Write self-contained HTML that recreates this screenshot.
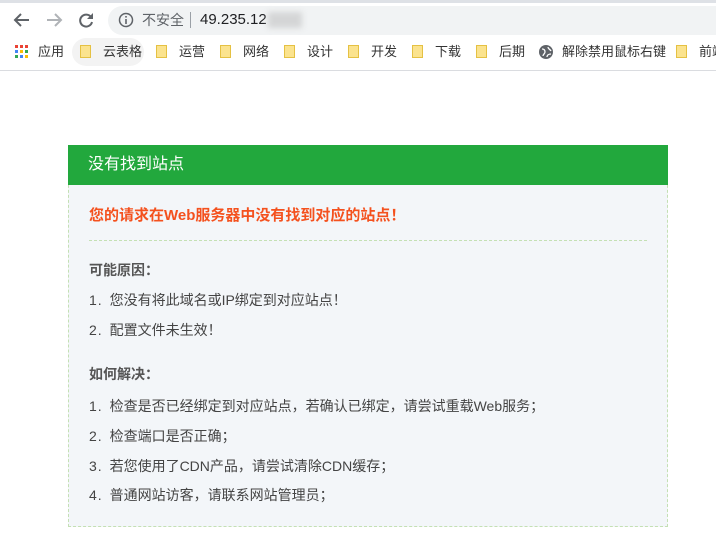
<!DOCTYPE html>
<html><head><meta charset="utf-8"><style>
*{margin:0;padding:0;box-sizing:border-box}
body{width:716px;height:559px;background:#fff;font-family:"Liberation Sans","Noto Sans CJK SC",sans-serif;position:relative;overflow:hidden;color:#333}
.abs{position:absolute}
.top{left:0;top:0;width:716px;height:3px;background:#dee1e6}
.addr{left:108px;top:6px;width:640px;height:29px;border-radius:15px;background:#f1f3f4}
.bm{top:38px;height:28px;font-size:13px;color:#333;line-height:28px;white-space:nowrap}
.fold{display:inline-block;width:11px;height:13px;background:#fbe38e;border:1px solid #e5c143;vertical-align:-2px;margin-right:12px}
.sep{left:0;top:70px;width:716px;height:1px;background:#dadce0}
.box{left:68px;top:145px;width:600px;height:382px;background:#f3f6f9;border:1px dashed #c4e0b4;border-top:none}
.hd{left:68px;top:145px;width:600px;height:40px;background:#22a83d;color:#fff;font-size:16px;line-height:40px;padding-left:20px}
.t{left:89px;font-size:14px;color:#444;white-space:nowrap}
.n{letter-spacing:1px;margin-right:3px}
</style></head><body>
<div class="abs top"></div>
<svg class="abs" style="left:12px;top:10px" width="90" height="20" viewBox="0 0 90 20">
<path d="M17 10H3M9 4L3 10l6 6" stroke="#5f6368" stroke-width="2" fill="none"/>
<path d="M35 10h14M43 4l6 6-6 6" stroke="#b0b3b7" stroke-width="2" fill="none"/>
<path d="M79 7a6 6 0 1 0 1 5" stroke="#5f6368" stroke-width="2" fill="none"/><path d="M81 3v6h-6z" fill="#5f6368"/>
</svg>
<div class="abs addr"></div>
<svg class="abs" style="left:118px;top:12px" width="16" height="16"><circle cx="8" cy="8" r="6.5" stroke="#5f6368" stroke-width="1.5" fill="none"/><rect x="7.2" y="7" width="1.6" height="5" fill="#5f6368"/><rect x="7.2" y="4" width="1.6" height="1.6" fill="#5f6368"/></svg>
<div class="abs" style="left:142px;top:10px;font-size:14px;color:#5f6368;line-height:20px">不安全</div>
<div class="abs" style="left:190px;top:12px;width:1px;height:16px;background:#9aa0a6"></div>
<div class="abs" style="left:200px;top:9px;font-size:15px;color:#202124;line-height:22px">49.235.12</div>
<div class="abs" style="left:268px;top:12px;width:34px;height:16px;background:#d4d5d6;filter:blur(3px)"></div>
<svg class="abs" style="left:15px;top:45px" width="14" height="14"><g><rect x="0" y="0" width="3" height="3" fill="#ea4335"/><rect x="5" y="0" width="3" height="3" fill="#ea4335"/><rect x="10" y="0" width="3" height="3" fill="#ea4335"/><rect x="0" y="5" width="3" height="3" fill="#4285f4"/><rect x="5" y="5" width="3" height="3" fill="#fbbc05"/><rect x="10" y="5" width="3" height="3" fill="#34a853"/><rect x="0" y="10" width="3" height="3" fill="#34a853"/><rect x="5" y="10" width="3" height="3" fill="#4285f4"/><rect x="10" y="10" width="3" height="3" fill="#fbbc05"/></g></svg>
<div class="abs bm" style="left:38px">应用</div>
<div class="abs" style="left:72px;top:38px;width:72px;height:28px;border-radius:14px;background:#f3f3f3"></div>
<div class="abs bm" style="left:80px"><span class="fold"></span>云表格</div>
<div class="abs bm" style="left:156px"><span class="fold"></span>运营</div>
<div class="abs bm" style="left:220px"><span class="fold"></span>网络</div>
<div class="abs bm" style="left:284px"><span class="fold"></span>设计</div>
<div class="abs bm" style="left:348px"><span class="fold"></span>开发</div>
<div class="abs bm" style="left:412px"><span class="fold"></span>下载</div>
<div class="abs bm" style="left:476px"><span class="fold"></span>后期</div>
<svg class="abs" style="left:539px;top:45px" width="14" height="14"><circle cx="7" cy="7" r="7" fill="#5f6368"/><path d="M3 4c2 0 3 1 3 3s-2 2-2 4M9 2c0 2 2 2 3 4M8 12c0-2 2-3 4-3" stroke="#fff" stroke-width="1.3" fill="none"/></svg>
<div class="abs bm" style="left:562px">解除禁用鼠标右键</div>
<div class="abs bm" style="left:676px"><span class="fold"></span>前端</div>
<div class="abs sep"></div>

<div class="abs box"></div>
<div class="abs hd">没有找到站点</div>
<div class="abs t" style="top:204px;font-size:15px;font-weight:bold;color:#f4511e">您的请求在Web服务器中没有找到对应的站点！</div>
<div class="abs" style="left:89px;top:240px;width:558px;border-top:1px dashed #c4e0b4"></div>
<div class="abs t" style="top:260px;font-weight:bold;color:#555">可能原因：</div>
<div class="abs t" style="top:290px"><span class="n">1.</span> 您没有将此域名或IP绑定到对应站点！</div>
<div class="abs t" style="top:320px"><span class="n">2.</span> 配置文件未生效！</div>
<div class="abs t" style="top:364px;font-weight:bold;color:#555">如何解决：</div>
<div class="abs t" style="top:396px"><span class="n">1.</span> 检查是否已经绑定到对应站点，若确认已绑定，请尝试重载Web服务；</div>
<div class="abs t" style="top:426px"><span class="n">2.</span> 检查端口是否正确；</div>
<div class="abs t" style="top:456px"><span class="n">3.</span> 若您使用了CDN产品，请尝试清除CDN缓存；</div>
<div class="abs t" style="top:485px"><span class="n">4.</span> 普通网站访客，请联系网站管理员；</div>
</body></html>
